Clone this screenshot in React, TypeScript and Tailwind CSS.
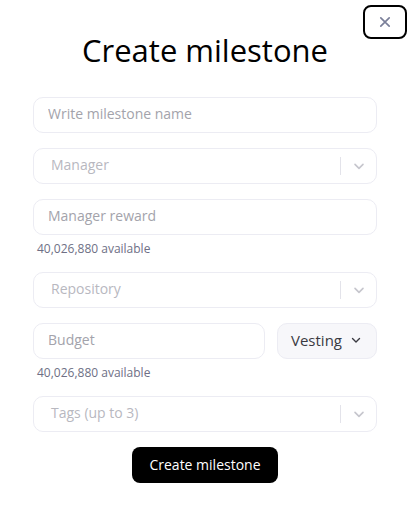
import React from 'react';

const font = { fontFamily: '"Open Sans", "Noto Sans", sans-serif' };

const Chevron: React.FC<{ className?: string }> = ({ className }) => (
  <svg viewBox="0 0 20 20" className={className} fill="none" stroke="currentColor" strokeWidth={2} strokeLinecap="round" strokeLinejoin="round">
    <path d="M5 8l5 5 5-5" />
  </svg>
);

const TextField: React.FC<{ placeholder: string; className?: string }> = ({ placeholder, className = '' }) => (
  <input
    placeholder={placeholder}
    className={`h-[36px] rounded-[10px] border border-[#ececf3] bg-white px-[14px] pb-[3px] text-[14px] text-[#1f2937] placeholder:text-[#a3a3ab] outline-none ${className}`}
  />
);

const SelectField: React.FC<{ placeholder: string }> = ({ placeholder }) => (
  <div className="flex h-[36px] items-center rounded-[10px] border border-[#ececf3] bg-white">
    <span className="flex-1 pb-[3px] pl-[17px] text-[14px] text-[#b8b8bf]">{placeholder}</span>
    <span className="h-[18px] w-px bg-[#e3e3ea]" />
    <span className="flex w-[35px] items-center justify-center text-[#c6c6cd]">
      <Chevron className="h-[16px] w-[16px]" />
    </span>
  </div>
);

const Available = () => (
  <p className="mt-[7px] pl-[4px] text-[12px] leading-[14px] text-[#6e6f85]">40,026,880 available</p>
);

export default function App() {
  return (
    <div className="relative h-[515px] w-[410px] bg-white" style={font}>
      <button className="absolute right-[3px] top-[5px] flex h-[34px] w-[44px] items-center justify-center rounded-[8px] border-2 border-black bg-white text-[#7a7f99]">
        <svg viewBox="0 0 20 20" className="h-[14px] w-[14px]" fill="none" stroke="currentColor" strokeWidth={2.4} strokeLinecap="round">
          <path d="M4 4l12 12M16 4L4 16" />
        </svg>
      </button>

      <div className="flex flex-col px-[33px] pt-[30px]">
        <h1 className="text-center text-[31px] font-medium leading-[40px] text-black">Create milestone</h1>

        <div className="mt-[27px] flex flex-col">
          <TextField placeholder="Write milestone name" className="w-full" />
          <div className="mt-[15px]">
            <SelectField placeholder="Manager" />
          </div>
          <div className="mt-[15px]">
            <TextField placeholder="Manager reward" className="w-full" />
            <Available />
          </div>
          <div className="mt-[16px]">
            <SelectField placeholder="Repository" />
          </div>
          <div className="mt-[15px]">
            <div className="flex gap-[12px]">
              <TextField placeholder="Budget" className="min-w-0 flex-1" />
              <button className="flex h-[36px] w-[100px] items-center justify-center gap-[7px] rounded-[10px] border border-[#ececf3] bg-[#f7f7fa] pb-[2px] text-[15px] text-[#3a3a42]">
                Vesting
                <Chevron className="h-[14px] w-[14px]" />
              </button>
            </div>
            <Available />
          </div>
          <div className="mt-[16px]">
            <SelectField placeholder="Tags (up to 3)" />
          </div>
        </div>

        <div className="mt-[15px] flex justify-center">
          <button className="h-[36px] rounded-[8px] bg-black px-[17px] pb-[2px] text-[14px] font-medium text-white">
            Create milestone
          </button>
        </div>
      </div>
    </div>
  );
}
